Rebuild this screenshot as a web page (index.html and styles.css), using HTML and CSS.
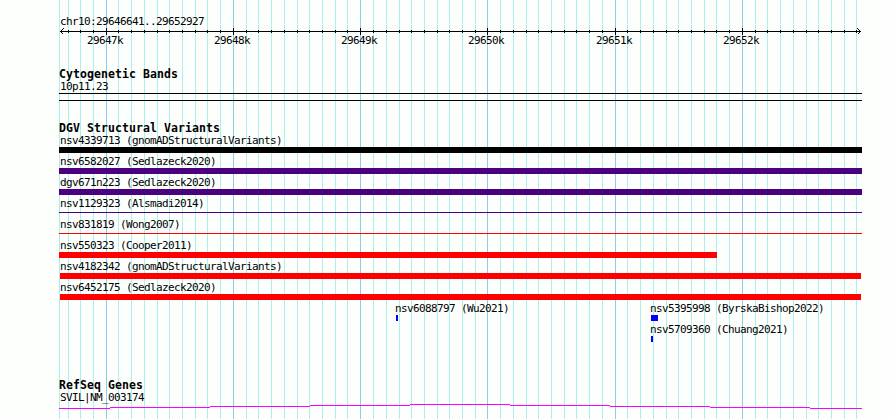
FILE: index.html
```
<!DOCTYPE html>
<html lang="en">
<head>
    <meta charset="UTF-8">
    <title>chr10:29646641..29652927</title>
    <link rel="stylesheet" href="styles.css">
</head>
<body>
    <div class="browser">
        <svg class="grid" width="890" height="419" shape-rendering="crispEdges">
            <path id="minor" class="minor"/>
            <path id="major" class="major"/>
        </svg>

        <div class="ruler">
            <div class="label">chr10:29646641..29652927</div>
            <svg class="axis" width="803" height="9" shape-rendering="crispEdges">
                <path d="M1 4.5H802"/>
                <path id="ticks"/>
                <path class="arrow" d="M4.5 1.5L1.5 4.5L4.5 7.5M798.5 1.5L801.5 4.5L798.5 7.5"/>
            </svg>
            <div class="scale">
                <span>29647k</span><span>29648k</span><span>29649k</span><span>29650k</span><span>29651k</span><span>29652k</span>
            </div>
        </div>

        <div class="section bands">
            <h2>Cytogenetic Bands</h2>
            <div class="label">10p11.23</div>
            <div class="band"></div>
        </div>

        <div class="section variants">
            <h2>DGV Structural Variants</h2>
            <div class="track"><div class="label">nsv4339713 (gnomADStructuralVariants)</div><div class="bar black"></div></div>
            <div class="track"><div class="label">nsv6582027 (Sedlazeck2020)</div><div class="bar purple"></div></div>
            <div class="track"><div class="label">dgv671n223 (Sedlazeck2020)</div><div class="bar purple"></div></div>
            <div class="track"><div class="label">nsv1129323 (Alsmadi2014)</div><div class="bar purple thin"></div></div>
            <div class="track"><div class="label">nsv831819 (Wong2007)</div><div class="bar red thin"></div></div>
            <div class="track"><div class="label">nsv550323 (Cooper2011)</div><div class="bar red partial"></div></div>
            <div class="track"><div class="label">nsv4182342 (gnomADStructuralVariants)</div><div class="bar red inset"></div></div>
            <div class="track"><div class="label">nsv6452175 (Sedlazeck2020)</div><div class="bar red inset"></div></div>
            <div class="track pair">
                <div><div class="label">nsv6088797 (Wu2021)</div><div class="bar blue small"></div></div>
                <div><div class="label">nsv5395998 (ByrskaBishop2022)</div><div class="bar blue medium"></div></div>
            </div>
            <div class="track pair">
                <div></div>
                <div><div class="label">nsv5709360 (Chuang2021)</div><div class="bar blue small"></div></div>
            </div>
        </div>

        <div class="section genes">
            <h2>RefSeq Genes</h2>
            <div class="label">SVIL|NM_003174</div>
            <svg class="gene" width="803" height="5" shape-rendering="crispEdges">
                <path d="M0 4.5H51M51 3.5H151M151 2.5H251M251 1.5H351M351 .5H451M451 1.5H551M551 2.5H651M651 3.5H751M751 4.5H803"/>
            </svg>
        </div>
    </div>

    <script>
        const major = [106, 233, 360, 487, 615, 742];
        const minor = [68, 80, 93, 118, 131, 144, 157, 169, 182, 195, 207, 220,
            246, 258, 271, 284, 297, 309, 322, 335, 347, 373, 386, 399, 411, 424, 437, 449, 462, 475,
            500, 513, 526, 538, 551, 564, 576, 589, 602, 627, 640, 653, 666, 678, 691, 704, 716, 729,
            755, 767, 780, 793, 806, 818, 831, 844, 856];

        function lines(xs, top, bottom, left) {
            return xs.map(x => `M${x - left + 0.5} ${top}V${bottom}`).join('');
        }

        document.getElementById('minor').setAttribute('d', lines([59].concat(minor), 0, 419, 0));
        document.getElementById('major').setAttribute('d', lines(major, 0, 419, 0));
        // axis starts at x = 59
        document.getElementById('ticks').setAttribute('d', lines(minor, 3, 6, 59) + lines(major, 1, 8, 59));
    </script>
</body>
</html>
```

FILE: styles.css
```
body {
    margin: 0;
    background-color: #fdfffc;
    color: #000;
    font-family: "DejaVu Sans Mono", monospace;
    font-size: 11px;
}
.browser {
    position: relative;
    box-sizing: border-box;
    width: 890px;
    height: 419px;
    padding: 15px 28px 0 59px;
    overflow: hidden;
}
.grid {
    position: absolute;
    top: 0;
    left: 0;
    z-index: -1;
}
path {
    fill: none;
    stroke: #000;
}
.minor {
    stroke: #afeeee;
}
.major {
    stroke: #87ceeb;
}
.label {
    height: 12px;
    padding-top: 1px;
    padding-left: 1px;
    line-height: 12px;
    letter-spacing: -0.622px;
    white-space: nowrap;
}
.ruler {
    height: 53px;
}
.axis, .gene {
    display: block;
}
.axis {
    margin-top: -1px;
}
.scale {
    display: grid;
    grid-template-columns: 127px 127px 127px 128px 127px 127px;
    margin-top: -1px;
    margin-left: 28px;
    line-height: 12px;
    letter-spacing: -0.622px;
}
h2 {
    height: 12px;
    margin: 0;
    font-size: 11.5px;
    line-height: 12px;
    letter-spacing: 0.077px;
}
.bands {
    height: 54px;
}
.band {
    height: 6px;
    border-top: 1px solid #000;
    border-bottom: 1px solid #000;
}
.variants {
    height: 257px;
}
.track {
    height: 21px;
}
.bar {
    height: 6px;
}
.thin {
    height: 1px;
    margin-top: 2px;
}
.black {
    background-color: #000;
}
.purple {
    background-color: #4b0082;
}
.red {
    background-color: #f00;
}
.blue {
    background-color: #00f;
}
.partial {
    width: 658px;
}
.inset {
    margin-left: 1px;
    margin-right: 1px;
}
.small {
    width: 2px;
}
.medium {
    width: 7px;
}
.pair {
    display: grid;
    grid-template-columns: 255px 1fr;
    margin-left: 336px;
}
.pair .label {
    padding-left: 0;
}
.pair .bar {
    margin-left: 1px;
}
.gene path {
    stroke: #f0f;
}
```
